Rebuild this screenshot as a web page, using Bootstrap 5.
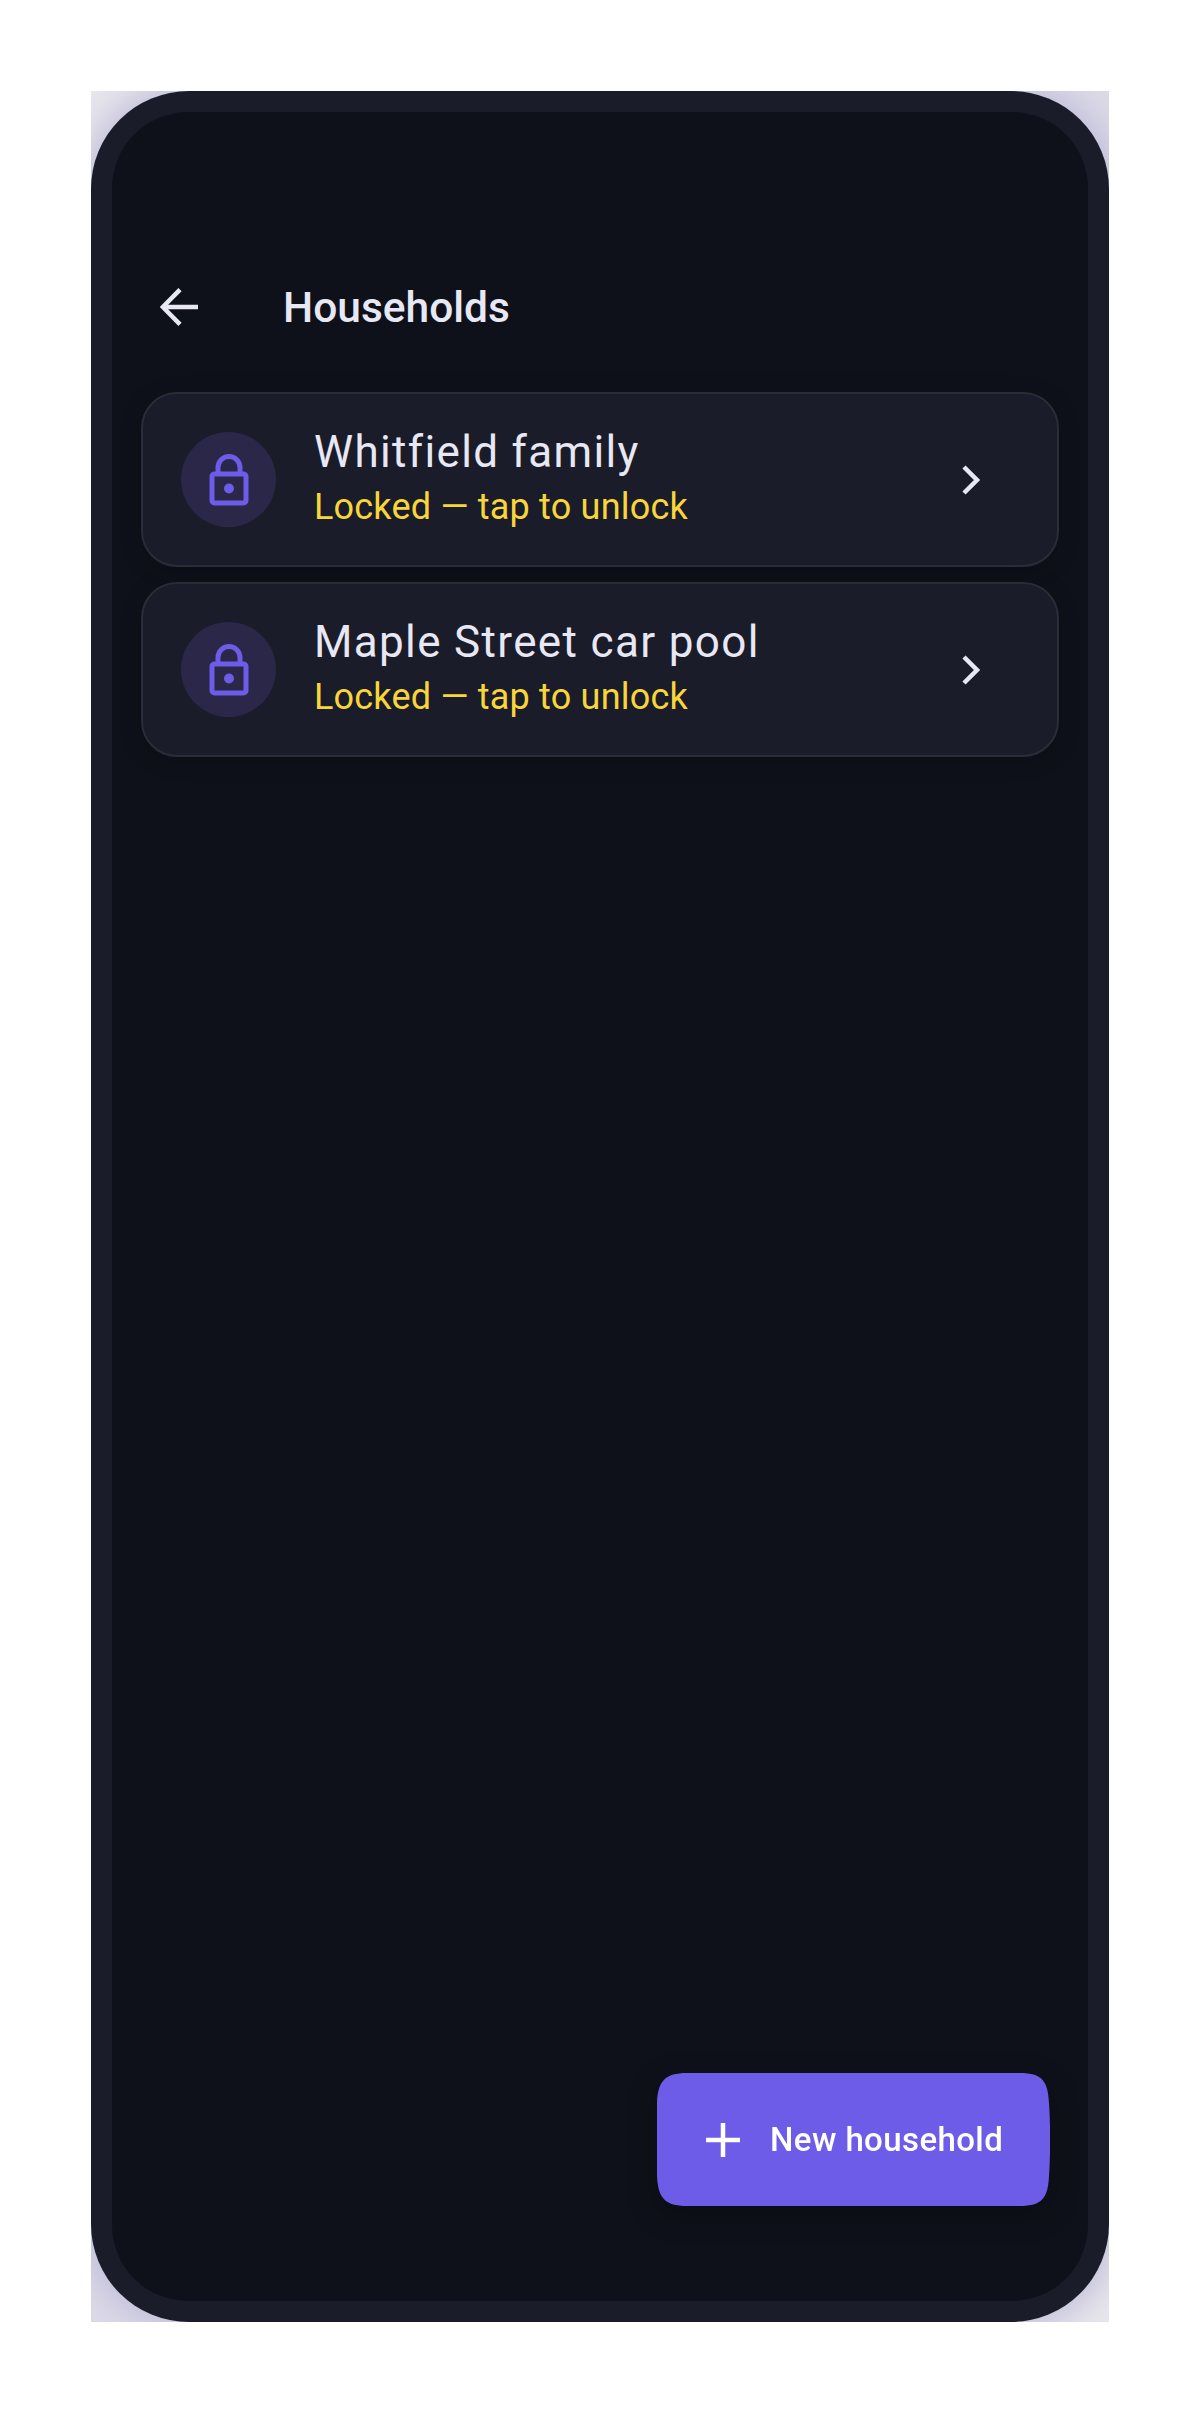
<!DOCTYPE html>
<html lang="en">
<head>
  <meta charset="UTF-8" />
  <meta name="viewport" content="width=device-width, initial-scale=1.0"/>
  <title>Households</title>
  <link rel="stylesheet" href="https://cdn.jsdelivr.net/npm/bootstrap@5.3.2/dist/css/bootstrap.min.css"/>
  <style>
    body {
      font-family: Roboto, 'Liberation Sans', sans-serif;
      background-color: #fff;
      padding: 91px 91px 91px;
    }
    .shot-clip {
      width: 1018px;
      height: 2231px;
      overflow: hidden;
      background: linear-gradient(135deg, #e8e7ec 0%, #d5d3e4 50%, #e8e7ec 100%);
    }
    .phone-frame {
      height: 100%;
      background-color: #1a1c2a;
      border-radius: 98px;
      padding: 21px;
      box-shadow: 0 0 36px 6px #bdbad8;
    }
    .phone-screen {
      height: 100%;
      background-color: #0f111a;
      border-radius: 76px;
      padding: 0 29px 0 29px;
    }
    .top-row {
      height: 280px;
      padding: 175px 0 0 19px;
      color: #e8e8f4;
    }
    .back-icon {
      width: 38px;
      height: 38px;
      margin-top: 1px;
      margin-right: 85px;
    }
    .page-title {
      font-size: 42.5px;
      font-weight: 500;
      line-height: 1;
      margin: 0;
      color: #e8e8f4;
    }
    .house-list {
      gap: 15px;
    }
    .house-row {
      height: 175px;
      background-color: #1a1c29;
      border: 2px solid #2a2c38;
      border-radius: 36px;
      padding: 0 76px 0 38px;
      gap: 38px;
      box-shadow: 0 4px 22px rgba(0, 0, 0, 0.18);
    }
    .lock-disc {
      width: 95px;
      height: 95px;
      border-radius: 50%;
      background-color: #2a2748;
    }
    .lock-disc svg {
      width: 40px;
      height: 52px;
    }
    .house-text {
      margin-top: -2px;
    }
    .house-name {
      font-size: 44px;
      line-height: 56px;
      letter-spacing: 1.35px;
      color: #e8e8f4;
    }
    .house-state {
      font-size: 36px;
      line-height: 54px;
      letter-spacing: 0.2px;
      color: #f8d53a;
    }
    .chevron-icon {
      width: 20px;
      height: 30px;
    }
    .fab-wrap {
      margin: auto 9px 95px auto;
      filter: drop-shadow(0 8px 14px rgba(0, 0, 0, 0.3));
    }
    .fab-new {
      width: 393px;
      height: 133px;
      padding: 0 0 0 48px;
      gap: 29px;
      background-color: #6c5ce7;
      border: 0;
      border-radius: 0;
      clip-path: path('M30 0H363C385 0 391 8 392 30C393.5 50 393.5 83 392 103C391 125 385 133 363 133H30C8 133 1 125 0 103C-1 83 -1 50 0 30C1 8 8 0 30 0Z');
      color: #fff;
      font-size: 33px;
      font-weight: 500;
      letter-spacing: 0.4px;
    }
    .fab-new svg {
      width: 36px;
      height: 36px;
    }
  </style>
</head>
<body>

<div class="shot-clip">
  <div class="phone-frame">
    <div class="phone-screen d-flex flex-column">

      <div class="top-row d-flex align-items-start">
        <svg class="back-icon" viewBox="0 0 38 38" fill="none" stroke="#e8e8f4" stroke-width="4.5">
          <path d="M38 19H3M20 1.6 2.8 19 20 36.4"/>
        </svg>
        <h1 class="page-title">Households</h1>
      </div>

      <!-- households -->
      <div class="house-list d-flex flex-column">
        <div class="house-row d-flex align-items-center">
          <div class="lock-disc d-flex align-items-center justify-content-center flex-shrink-0">
            <svg viewBox="0 0 40 52" fill="none" stroke="#6c5ce7" stroke-width="5">
              <path d="M9 20V13.5a11 11 0 0 1 22 0V20"/>
              <rect x="3" y="20" width="34" height="29" rx="2.5"/>
              <circle cx="20" cy="34.5" r="5" fill="#6c5ce7" stroke="none"/>
            </svg>
          </div>
          <div class="house-text flex-grow-1">
            <div class="house-name">Whitfield family</div>
            <div class="house-state">Locked — tap to unlock</div>
          </div>
          <svg class="chevron-icon" viewBox="0 0 20 30" fill="none" stroke="#e8e8f4" stroke-width="4.5">
            <path d="M3 2 16 15 3 28"/>
          </svg>
        </div>

        <div class="house-row d-flex align-items-center">
          <div class="lock-disc d-flex align-items-center justify-content-center flex-shrink-0">
            <svg viewBox="0 0 40 52" fill="none" stroke="#6c5ce7" stroke-width="5">
              <path d="M9 20V13.5a11 11 0 0 1 22 0V20"/>
              <rect x="3" y="20" width="34" height="29" rx="2.5"/>
              <circle cx="20" cy="34.5" r="5" fill="#6c5ce7" stroke="none"/>
            </svg>
          </div>
          <div class="house-text flex-grow-1">
            <div class="house-name">Maple Street car pool</div>
            <div class="house-state">Locked — tap to unlock</div>
          </div>
          <svg class="chevron-icon" viewBox="0 0 20 30" fill="none" stroke="#e8e8f4" stroke-width="4.5">
            <path d="M3 2 16 15 3 28"/>
          </svg>
        </div>
      </div>

      <div class="fab-wrap">
        <button class="fab-new btn d-flex align-items-center">
          <svg viewBox="0 0 36 36" fill="none" stroke="#fff" stroke-width="4.5">
            <path d="M18 1V35M1 18H35"/>
          </svg>
          New household
        </button>
      </div>

    </div>
  </div>
</div>

<script src="https://cdn.jsdelivr.net/npm/bootstrap@5.3.2/dist/js/bootstrap.bundle.min.js"></script>
</body>
</html>
